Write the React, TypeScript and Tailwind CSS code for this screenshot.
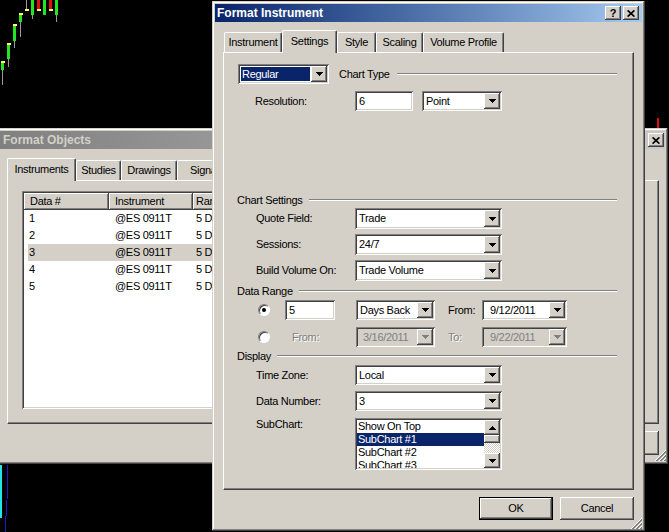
import React from 'react';

// classic 3d edges
const raised =
  'shadow-[inset_-1px_-1px_0_#404040,inset_1px_1px_0_#ffffff,inset_-2px_-2px_0_#808080,inset_2px_2px_0_#d4d0c8]';
const sunken =
  'shadow-[inset_1px_1px_0_#808080,inset_-1px_-1px_0_#ffffff,inset_2px_2px_0_#404040,inset_-2px_-2px_0_#d4d0c8]';
const frame =
  'shadow-[inset_-1px_-1px_0_#404040,inset_1px_1px_0_#d4d0c8,inset_-2px_-2px_0_#808080,inset_2px_2px_0_#ffffff]';
const dimText = 'text-[#808080] [text-shadow:1px_1px_0_#ffffff]';

const Arrow = ({ up = false, dim = false }: { up?: boolean; dim?: boolean }) => (
  <svg width="7" height="4" viewBox="0 0 7 4" shapeRendering="crispEdges">
    <path
      d={up ? 'M3 0h1v1h1v1h1v1h1v1H0V3h1V2h1V1h1z' : 'M0 0h7v1H6v1H5v1H4v1H3V3H2V2H1V1H0z'}
      fill={dim ? '#808080' : '#000000'}
    />
  </svg>
);

const Rule = ({ className = '' }: { className?: string }) => (
  <div className={`flex-1 h-[2px] border-t border-b border-t-[#808080] border-b-white ${className}`} />
);

type ComboProps = { className: string; value: string; disabled?: boolean; active?: boolean; pad?: string };

const Combo = ({ className, value, disabled, active, pad = 'pl-[1px]' }: ComboProps) => (
  <div className={`flex shrink-0 p-[2px] ${sunken} ${disabled ? 'bg-[#d4d0c8]' : 'bg-white'} ${className}`}>
    <div className="flex-1 min-w-0 flex p-[1px]">
      <div
        className={`flex-1 flex items-center whitespace-nowrap overflow-hidden ${pad} ${
          active ? 'bg-[#0a246a] text-white' : disabled ? 'text-[#808080]' : 'text-black'
        }`}
      >
        {value}
      </div>
    </div>
    <div className={`w-[16px] shrink-0 bg-[#d4d0c8] flex items-center justify-center ${raised}`}>
      <Arrow dim={disabled} />
    </div>
  </div>
);

const TextBox = ({ className, value }: { className: string; value: string }) => (
  <div className={`flex shrink-0 items-center pl-[4px] bg-white ${sunken} ${className}`}>{value}</div>
);

const Radio = ({ checked }: { checked?: boolean }) => (
  <div className="w-[12px] h-[12px] shrink-0 rounded-full bg-white border border-t-[#808080] border-l-[#808080] border-r-white border-b-white shadow-[inset_1px_1px_0_#404040] flex items-center justify-center">
    {checked && <div className="w-[4px] h-[4px] rounded-full bg-black" />}
  </div>
);

const GroupHead = ({ title, className }: { title: string; className: string }) => (
  <div className={`flex items-center h-[14px] ml-[13px] w-[380px] ${className}`}>
    <span className="whitespace-nowrap">{title}</span>
    <Rule className="ml-[6px]" />
  </div>
);

const FieldRow = ({ label, className, children }: { label: string; className: string; children: React.ReactNode }) => (
  <div className={`flex items-center ${className}`}>
    <span className="ml-[32px] w-[99px] shrink-0 whitespace-nowrap">{label}</span>
    {children}
  </div>
);

type Tab = { label: string; w: string };

const TabStrip = ({ tabs, selected, className = '' }: { tabs: Tab[]; selected: number; className?: string }) => (
  <div className={`flex items-end h-[22px] relative z-10 ${className}`}>
    {tabs.map((t, i) => (
      <div
        key={t.label}
        className={`${t.w} shrink-0 flex items-center justify-center whitespace-nowrap overflow-hidden bg-[#d4d0c8] border-t border-l border-r border-t-white border-l-white border-r-[#404040] rounded-t-[2px] shadow-[inset_-1px_0_0_#808080] ${
          i === selected ? 'h-[23px] -mb-[1px] pb-[2px]' : 'h-[20px]'
        }`}
      >
        {t.label}
      </div>
    ))}
  </div>
);

const TitleButton = ({ children }: { children: React.ReactNode }) => (
  <div className={`w-[16px] h-[14px] bg-[#d4d0c8] flex items-center justify-center ${raised}`}>{children}</div>
);

const CloseGlyph = () => (
  <svg width="8" height="7" viewBox="0 0 8 7">
    <path d="M0.6 0.4L7.4 6.6M7.4 0.4L0.6 6.6" stroke="#000000" strokeWidth="1.7" />
  </svg>
);

const Grip = () => (
  <svg width="12" height="12" viewBox="0 0 12 12" shapeRendering="crispEdges">
    <path d="M11 0L0 11M11 4L4 11M11 8L8 11" stroke="#ffffff" />
    <path d="M11 1L1 11M11 2L2 11M11 5L5 11M11 6L6 11M11 9L9 11M11 10L10 11" stroke="#808080" />
  </svg>
);

const Chart = () => (
  <svg className="absolute inset-0" width="669" height="532" viewBox="0 0 669 532" shapeRendering="crispEdges">
    <g fill="#9a9a9a">
      <rect x="2" y="70" width="1" height="15" />
      <rect x="8" y="59" width="1" height="8" />
      <rect x="14" y="41" width="1" height="7" />
      <rect x="20" y="22" width="1" height="15" />
      <rect x="26" y="0" width="1" height="9" />
      <rect x="32" y="15" width="1" height="4" />
      <rect x="56" y="15" width="1" height="7" />
    </g>
    <g fill="#22e622">
      <rect x="1" y="63" width="3" height="7" />
      <rect x="7" y="45" width="3" height="14" />
      <rect x="13" y="26" width="3" height="15" />
      <rect x="19" y="15" width="3" height="7" />
      <rect x="31" y="0" width="3" height="15" />
      <rect x="43" y="0" width="3" height="15" />
      <rect x="55" y="0" width="3" height="15" />
    </g>
    <g fill="#e01010">
      <rect x="37" y="0" width="3" height="9" />
      <rect x="49" y="0" width="3" height="9" />
      <rect x="657" y="118" width="2" height="10" />
    </g>
    <g fill="#ffff66">
      <rect x="1" y="61" width="4" height="2" />
      <rect x="7" y="43" width="4" height="2" />
      <rect x="13" y="24" width="4" height="2" />
      <rect x="19" y="13" width="4" height="2" />
      <rect x="25" y="9" width="4" height="2" />
      <rect x="37" y="9" width="4" height="2" />
      <rect x="49" y="9" width="4" height="2" />
    </g>
    <rect x="0" y="465" width="2" height="53" fill="#22e6e6" />
    <path d="M8 465L7 500L5 532" stroke="#1a1ad0" strokeWidth="1" fill="none" />
  </svg>
);

const rows = ['1', '2', '3', '4', '5'];

const FormatObjects = () => (
  <div className={`absolute z-[1] left-[-3px] top-[128px] w-[671px] h-[336px] p-[3px] bg-[#d4d0c8] flex flex-col ${frame}`}>
    <div className="h-[18px] shrink-0 flex items-center pl-[3px] pr-[1px] bg-linear-to-r from-[#808080] to-[#c8c8c8]">
      <span className="flex-1 font-bold text-[12px] tracking-normal text-[#d4d0c8]">Format Objects</span>
      <TitleButton>
        <CloseGlyph />
      </TitleButton>
    </div>
    <TabStrip
      className="mt-[9px] ml-[7px]"
      selected={0}
      tabs={[
        { label: 'Instruments', w: 'w-[69px]' },
        { label: 'Studies', w: 'w-[45px]' },
        { label: 'Drawings', w: 'w-[56px]' },
        { label: 'Signals', w: 'w-[60px]' },
      ]}
    />
    <div className="ml-[7px] mr-[6px] h-[244px] shrink-0 border border-white border-r-[#404040] border-b-[#404040] shadow-[inset_-1px_-1px_0_#808080] flex flex-col">
      <div className={`ml-[14px] mt-[10px] w-[618px] h-[218px] p-[2px] bg-white flex flex-col ${sunken}`}>
        <div className="flex h-[17px] shrink-0">
          <div className={`w-[85px] pl-[6px] flex items-center bg-[#d4d0c8] ${raised}`}>Data #</div>
          <div className={`w-[84px] pl-[6px] flex items-center bg-[#d4d0c8] ${raised}`}>Instrument</div>
          <div className={`w-[110px] pl-[3px] flex items-center bg-[#d4d0c8] ${raised}`}>Range</div>
          <div className={`flex-1 bg-[#d4d0c8] ${raised}`} />
        </div>
        {rows.map((r) => (
          <div key={r} className={`ml-[4px] h-[17px] flex items-center ${r === '3' ? 'bg-[#d4d0c8]' : ''}`}>
            <span className="w-[87px] pl-[1px]">{r}</span>
            <span className="w-[81px]">@ES 0911T</span>
            <span>5 Days Back</span>
          </div>
        ))}
      </div>
    </div>
    <div className="mt-[7px] mr-[6px] flex justify-end">
      <div className={`w-[75px] h-[24px] bg-[#d4d0c8] flex items-center justify-center ${raised}`}>Close</div>
    </div>
    <div className="absolute right-[1px] bottom-[2px]">
      <Grip />
    </div>
  </div>
);

const FormatInstrument = () => (
  <div className={`absolute z-[2] left-[212px] top-[1px] w-[433px] h-[530px] p-[3px] bg-[#d4d0c8] flex flex-col ${frame}`}>
    <div className="h-[18px] shrink-0 flex items-center pl-[2px] pr-[3px] bg-linear-to-r from-[#0a246a] to-[#a6caf0]">
      <span className="flex-1 font-bold text-[12px] tracking-normal text-white">Format Instrument</span>
      <TitleButton>
        <span className="font-bold text-[11px] leading-none">?</span>
      </TitleButton>
      <div className="ml-[2px]">
        <TitleButton>
          <CloseGlyph />
        </TitleButton>
      </div>
    </div>

    <div className="flex-1 flex flex-col px-[8px] pt-[8px]">
      <TabStrip
        className="ml-[1px]"
        selected={1}
        tabs={[
          { label: 'Instrument', w: 'w-[58px]' },
          { label: 'Settings', w: 'w-[55px]' },
          { label: 'Style', w: 'w-[39px]' },
          { label: 'Scaling', w: 'w-[47px]' },
          { label: 'Volume Profile', w: 'w-[81px]' },
        ]}
      />

      <div className="h-[438px] shrink-0 border border-white border-r-[#404040] border-b-[#404040] shadow-[inset_-1px_-1px_0_#808080] flex flex-col">
        {/* chart type */}
        <div className="mt-[11px] ml-[14px] w-[379px] h-[20px] flex items-center">
          <Combo className="w-[91px] h-[20px]" value="Regular" active />
          <span className="ml-[10px] whitespace-nowrap">Chart Type</span>
          <Rule className="ml-[7px]" />
        </div>
        <div className="mt-[7px] h-[20px] flex items-center">
          <span className="ml-[31px] w-[100px] shrink-0">Resolution:</span>
          <TextBox className="w-[58px] h-[20px]" value="6" />
          <Combo className="ml-[9px] w-[80px] h-[20px]" value="Point" />
        </div>

        {/* chart settings */}
        <GroupHead title="Chart Settings" className="mt-[82px]" />
        <FieldRow label="Quote Field:" className="mt-[1px] h-[21px]">
          <Combo className="w-[147px] h-[21px]" value="Trade" />
        </FieldRow>
        <FieldRow label="Sessions:" className="mt-[5px] h-[21px]">
          <Combo className="w-[147px] h-[21px]" value="24/7" />
        </FieldRow>
        <FieldRow label="Build Volume On:" className="mt-[5px] h-[21px]">
          <Combo className="w-[147px] h-[21px]" value="Trade Volume" />
        </FieldRow>

        {/* data range */}
        <GroupHead title="Data Range" className="mt-[3px]" />
        <div className="mt-[2px] h-[20px] flex items-center">
          <div className="ml-[34px]">
            <Radio checked />
          </div>
          <div className="w-[86px] shrink-0 flex">
            <TextBox className="ml-[15px] w-[50px] h-[20px]" value="5" />
          </div>
          <Combo className="w-[79px] h-[20px]" value="Days Back" />
          <span className="w-[47px] shrink-0 pl-[13px]">From:</span>
          <Combo className="w-[85px] h-[20px]" value="9/12/2011" pad="pl-[5px]" />
        </div>
        <div className="mt-[7px] h-[20px] flex items-center">
          <div className="ml-[34px]">
            <Radio />
          </div>
          <span className={`w-[86px] shrink-0 pl-[22px] ${dimText}`}>From:</span>
          <Combo className="w-[79px] h-[20px]" value="3/16/2011" pad="pl-[4px]" disabled />
          <span className={`w-[47px] shrink-0 pl-[13px] ${dimText}`}>To:</span>
          <Combo className="w-[85px] h-[20px]" value="9/22/2011" pad="pl-[5px]" disabled />
        </div>

        {/* display */}
        <GroupHead title="Display" className="mt-[2px]" />
        <FieldRow label="Time Zone:" className="mt-[2px] h-[20px]">
          <Combo className="w-[147px] h-[20px]" value="Local" />
        </FieldRow>
        <FieldRow label="Data Number:" className="mt-[6px] h-[20px]">
          <Combo className="w-[147px] h-[20px]" value="3" />
        </FieldRow>
        <div className="mt-[7px] flex items-start">
          <span className="ml-[32px] w-[99px] shrink-0 leading-[12px]">SubChart:</span>
          <div className={`w-[147px] h-[52px] p-[2px] bg-white flex ${sunken}`}>
            <div className="flex-1 min-w-0 overflow-hidden">
              {['Show On Top', 'SubChart #1', 'SubChart #2', 'SubChart #3'].map((s, i) => (
                <div
                  key={s}
                  className={`h-[13px] leading-[13px] pl-[1px] whitespace-nowrap ${
                    i === 1 ? 'bg-[#0a246a] text-white' : ''
                  }`}
                >
                  {s}
                </div>
              ))}
            </div>
            <div className="w-[16px] shrink-0 flex flex-col">
              <div className={`h-[15px] bg-[#d4d0c8] flex items-center justify-center ${raised}`}>
                <Arrow up />
              </div>
              <div className={`h-[8px] bg-[#d4d0c8] ${raised}`} />
              <div className="flex-1 bg-[repeating-conic-gradient(#d4d0c8_0_25%,#ffffff_0_50%)] bg-[length:2px_2px]" />
              <div className={`h-[15px] bg-[#d4d0c8] flex items-center justify-center ${raised}`}>
                <Arrow />
              </div>
            </div>
          </div>
        </div>
      </div>

      <div className="mt-[7px] flex justify-end gap-[7px]">
        <div className="w-[74px] h-[23px] border border-black">
          <div className={`w-full h-full bg-[#d4d0c8] flex items-center justify-center ${raised}`}>OK</div>
        </div>
        <div className={`w-[74px] h-[23px] bg-[#d4d0c8] flex items-center justify-center ${raised}`}>Cancel</div>
      </div>
    </div>

    <div className="absolute right-[2px] bottom-[1px]">
      <Grip />
    </div>
  </div>
);

export default function App() {
  return (
    <div className="relative w-[669px] h-[532px] overflow-hidden bg-black font-['Liberation_Sans',Arial,sans-serif] text-[11px] tracking-[-0.3px] text-black">
      <Chart />
      <FormatObjects />
      <FormatInstrument />
    </div>
  );
}
